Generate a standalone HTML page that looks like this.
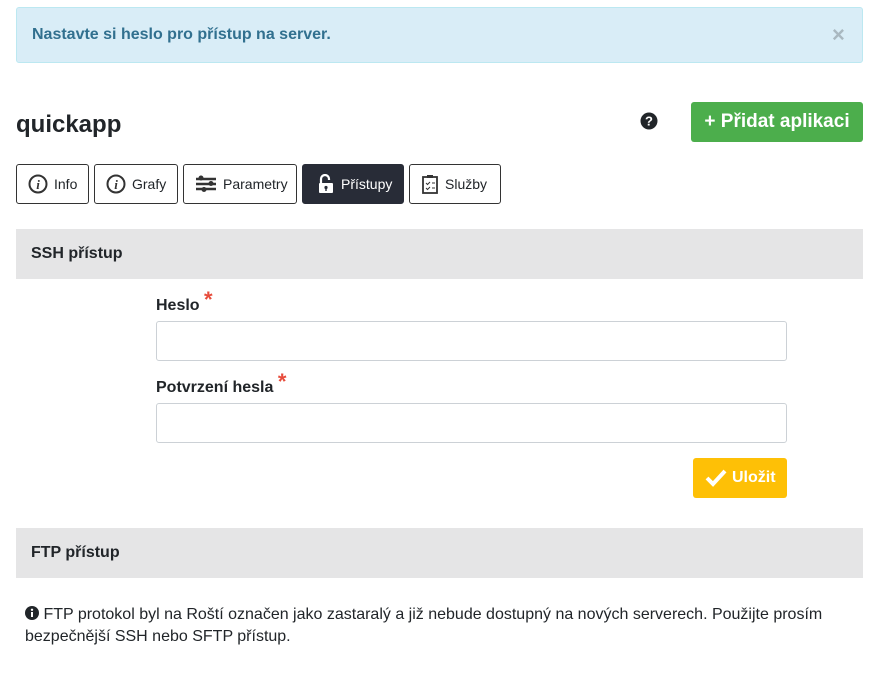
<!DOCTYPE html>
<html><head><meta charset="utf-8"><style>
*{box-sizing:border-box}
body{margin:0;width:874px;height:695px;background:#fff;font-family:"Liberation Sans",sans-serif;color:#212529;position:relative;overflow:hidden}
.abs{position:absolute}
.alert{left:16px;top:7px;width:847px;height:56px;background:#d9edf7;border:1px solid #bce8f1;border-radius:3px;color:#31708f;font-weight:bold;font-size:16px;padding:18px 15px}
.close{left:832px;top:22px;font-size:22px;color:#a9b8c0;font-weight:bold}
h1{position:absolute;left:16px;top:111px;margin:0;font-size:24px;font-weight:bold}
.add{left:691px;top:102px;width:172px;height:40px;background:#4cae4c;border-radius:3px;color:#fff;font-weight:bold;font-size:19px;line-height:40px;text-align:center}
.tab{top:164px;height:40px;border:1px solid #333;border-radius:3px;font-size:14px;line-height:38px;display:flex;align-items:center;gap:6px;padding-left:11px}
.tab svg{flex:none}
.sec{left:16px;width:847px;height:50px;background:#e5e5e6;font-weight:bold;font-size:16px;padding:16px 15px}
label{position:absolute;left:156px;font-weight:bold;font-size:16px}
label span{color:#e74c3c;font-size:22px;position:relative;top:-3px}
.inp{left:156px;width:631px;height:40px;border:1px solid #ccd1d6;border-radius:3px}
.save{left:693px;top:458px;width:94px;height:40px;background:#fec006;border-radius:3px;color:#fff;font-weight:bold;font-size:16px;line-height:40px;padding-left:39px}
.note{left:25px;top:604px;font-size:16px;line-height:22px;width:820px}
</style></head><body>
<div class="abs alert">Nastavte si heslo pro přístup na server.</div>
<div class="abs close">×</div>
<h1>quickapp</h1>
<svg class="abs" style="left:640px;top:112px" width="18" height="18" viewBox="0 0 18 18"><circle cx="9" cy="9" r="8.5" fill="#212529"/><text x="9" y="13.5" font-size="13" font-weight="bold" fill="#fff" text-anchor="middle" font-family="Liberation Sans">?</text></svg>
<div class="abs add">+ Přidat aplikaci</div>
<div class="abs tab" style="left:16px;width:73px"><svg width="20" height="20"><circle cx="10" cy="10" r="8.5" fill="none" stroke="#333" stroke-width="2"/><text x="10" y="15" font-size="13" font-style="italic" font-weight="bold" text-anchor="middle" fill="#333" font-family="Liberation Serif">i</text></svg>Info</div>
<div class="abs tab" style="left:94px;width:84px"><svg width="20" height="20"><circle cx="10" cy="10" r="8.5" fill="none" stroke="#333" stroke-width="2"/><text x="10" y="15" font-size="13" font-style="italic" font-weight="bold" text-anchor="middle" fill="#333" font-family="Liberation Serif">i</text></svg>Grafy</div>
<div class="abs tab" style="left:183px;width:114px"><svg width="22" height="18"><g stroke="#333" stroke-width="2.5"><line x1="1" y1="4" x2="21" y2="4"/><line x1="1" y1="9" x2="21" y2="9"/><line x1="1" y1="14" x2="21" y2="14"/></g><circle cx="6" cy="3" r="2.5" fill="#333"/><circle cx="16" cy="8.5" r="2.5" fill="#333"/><circle cx="9" cy="14.5" r="2.5" fill="#333"/></svg>Parametry</div>
<div class="abs tab" style="left:302px;width:102px;background:#282c37;color:#fff;border-color:#282c37;padding-left:14px"><svg width="18" height="20"><path d="M4 9V5a4 4 0 0 1 8 0v1" fill="none" stroke="#fff" stroke-width="2.2"/><rect x="2" y="9" width="14" height="10" rx="1" fill="#fff"/><circle cx="9" cy="13.5" r="1.6" fill="#282c37"/><rect x="8.3" y="14" width="1.4" height="3" fill="#282c37"/></svg>Přístupy</div>
<div class="abs tab" style="left:409px;width:92px"><svg width="18" height="20"><rect x="2" y="3" width="14" height="16" fill="none" stroke="#333" stroke-width="1.8"/><rect x="6" y="1" width="6" height="3" fill="#333"/><path d="M5 9l1.5 1.5L9 8M5 14l1.5 1.5L9 13M11 9h3M11 14h3" stroke="#333" stroke-width="1" fill="none"/></svg>Služby</div>
<div class="abs sec" style="top:229px">SSH přístup</div>
<label style="top:290px">Heslo <span>*</span></label>
<div class="abs inp" style="top:321px"></div>
<label style="top:372px">Potvrzení hesla <span>*</span></label>
<div class="abs inp" style="top:403px"></div>
<div class="abs save">Uložit</div>
<svg class="abs" style="left:705px;top:468px" width="22" height="19"><path d="M2 10l6 6L20 3" fill="none" stroke="#fff" stroke-width="4"/></svg>
<div class="abs sec" style="top:528px">FTP přístup</div>
<div class="abs note"><svg width="14" height="14" style="vertical-align:-1px"><circle cx="7" cy="7" r="7" fill="#212529"/><rect x="6" y="6" width="2" height="5" fill="#fff"/><circle cx="7" cy="3.8" r="1.2" fill="#fff"/></svg> FTP protokol byl na Roští označen jako zastaralý a již nebude dostupný na nových serverech. Použijte prosím bezpečnější SSH nebo SFTP přístup.</div>
</body></html>
